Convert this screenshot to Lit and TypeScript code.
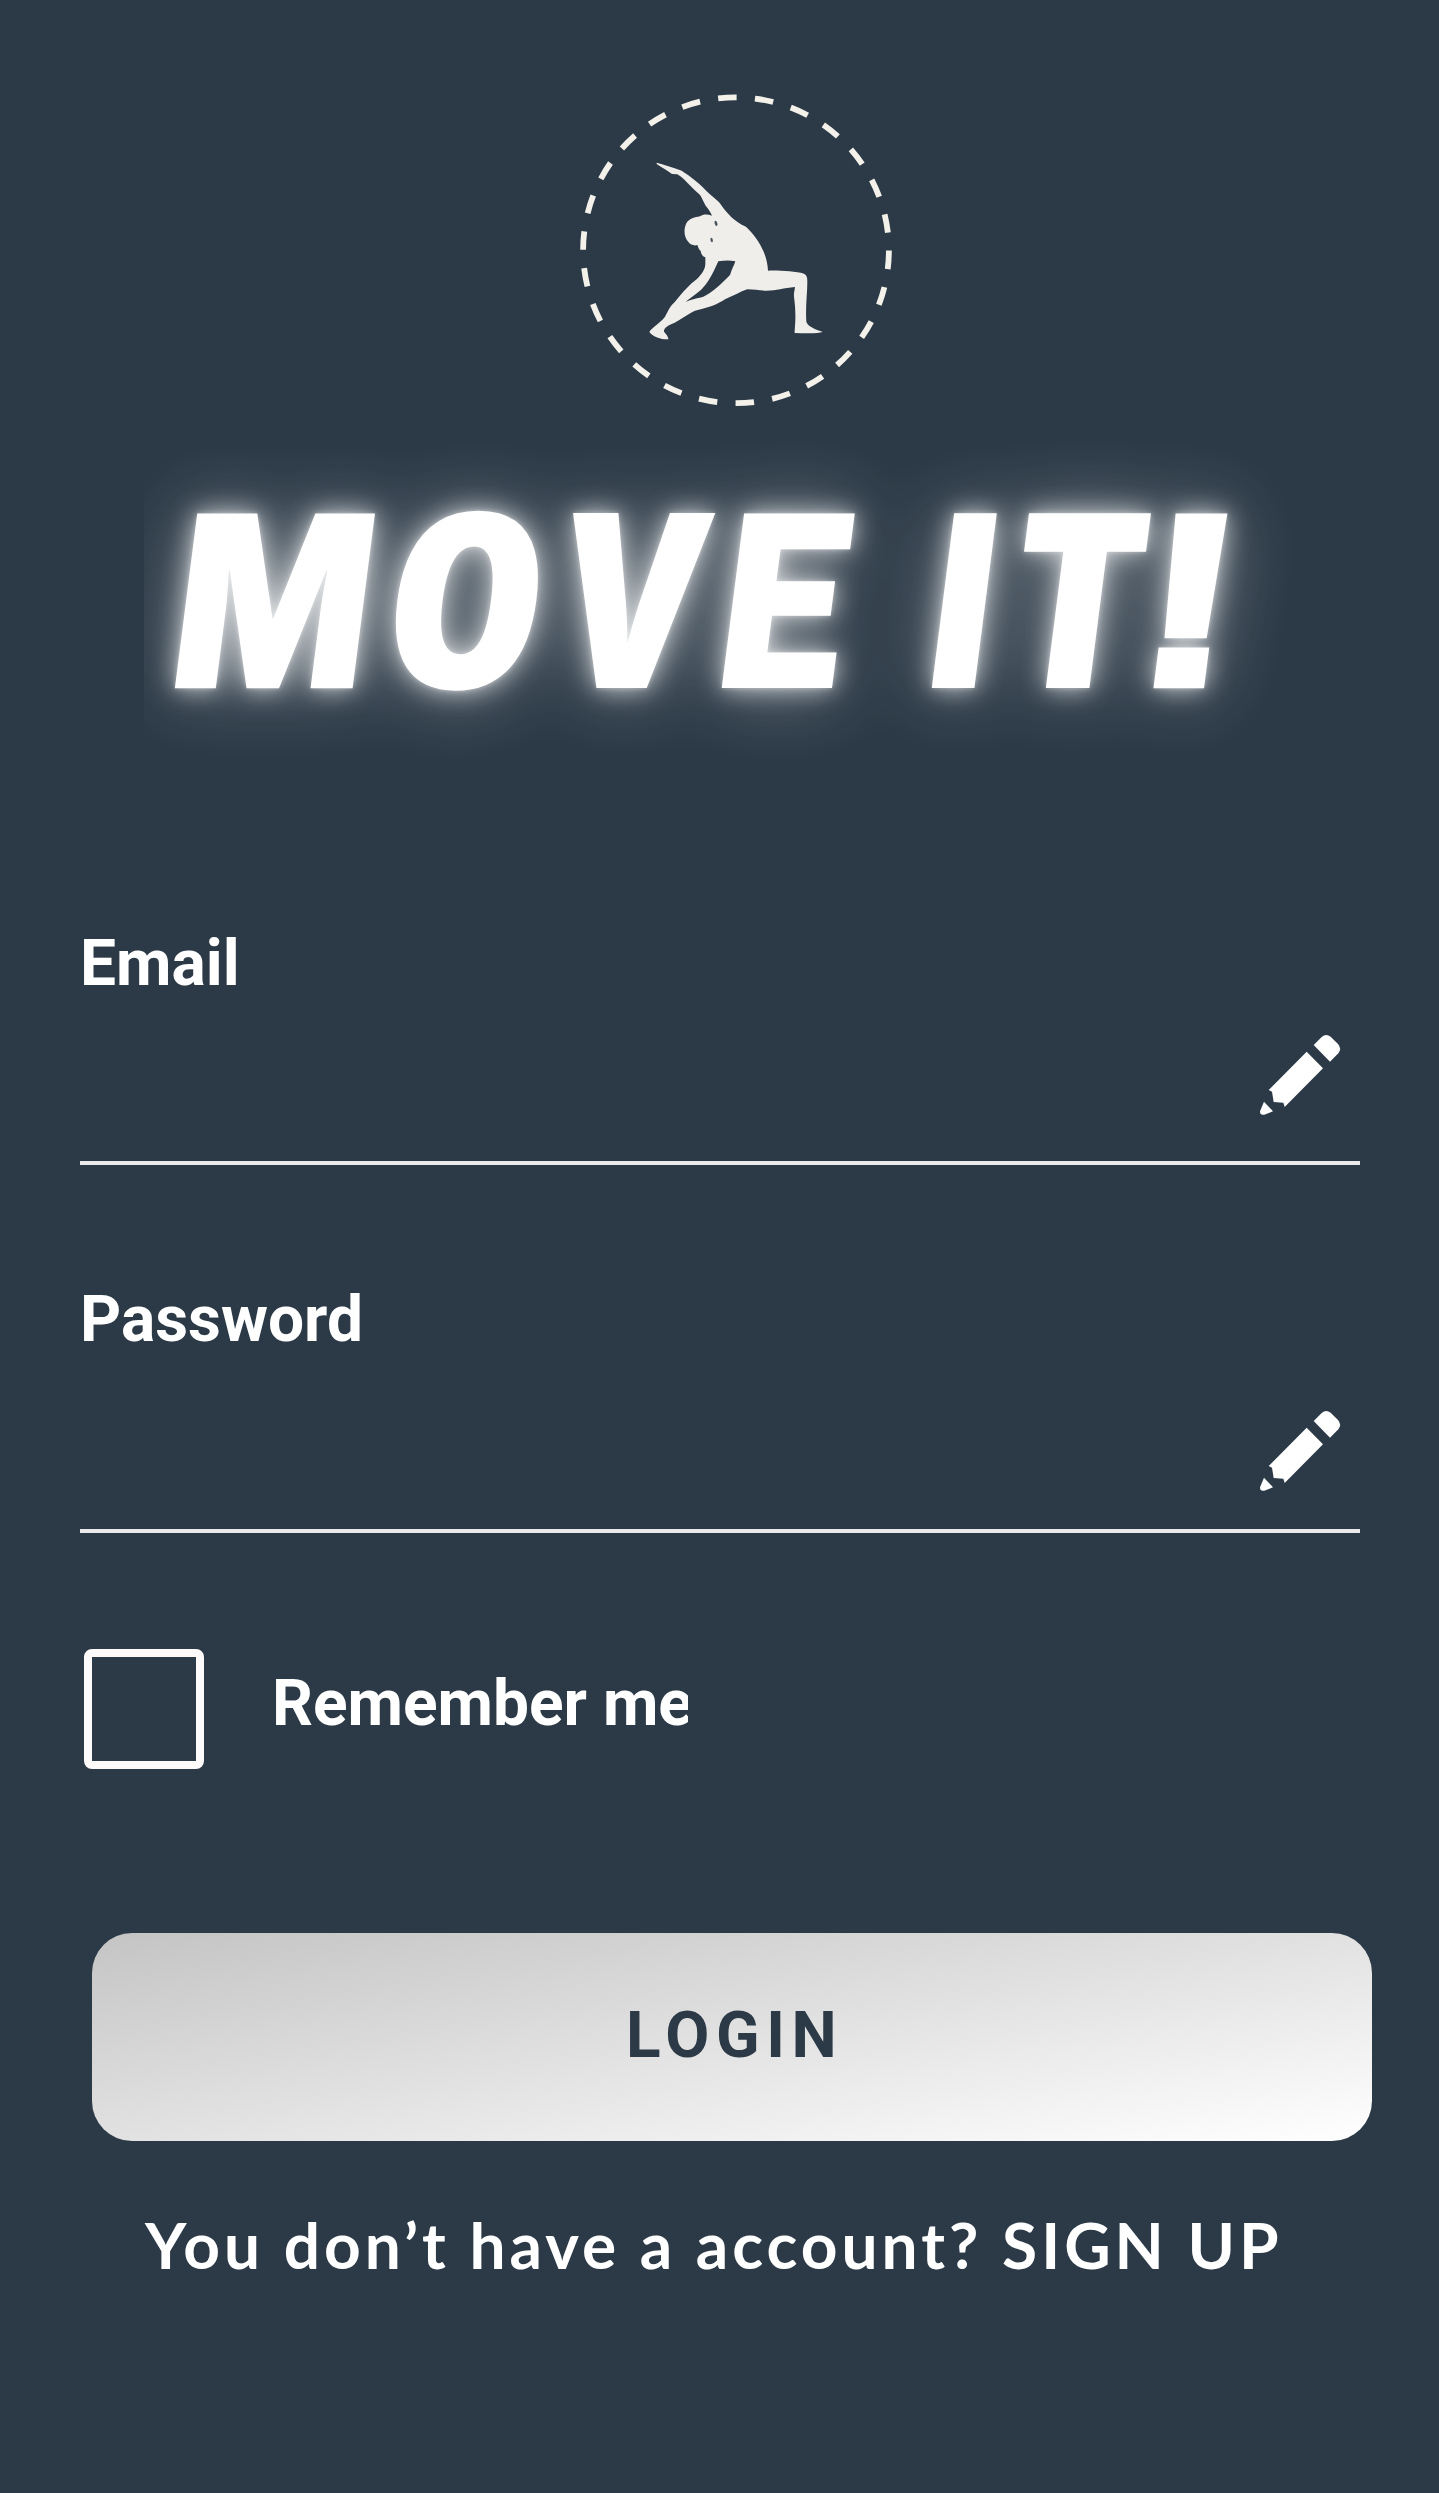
import { LitElement, html, css, svg } from "lit";
import { customElement, property } from "lit/decorators.js";

interface Glyph {
  ch: string;
  face: string;
  scale: number;
  x: number;
  y: number;
}

const SLANT = -0.128;

const TITLE: Glyph[] = [
  { ch: "M", face: "narrow", scale: 1.053, x: 159.6, y: 688.3 },
  { ch: "O", face: "narrow", scale: 1.045, x: 376.1, y: 688.3 },
  { ch: "V", face: "narrow", scale: 1.036, x: 550.7, y: 688.3 },
  { ch: "E", face: "grotesk", scale: 0.908, x: 711.9, y: 686.3 },
  { ch: "I", face: "narrow", scale: 1.023, x: 917.1, y: 688.3 },
  { ch: "T", face: "wide", scale: 0.92, x: 1001.1, y: 688.3 },
  { ch: "!", face: "mark", scale: 1.18, x: 1132.5, y: 683.8 },
];

@customElement("brand-logo")
export class BrandLogo extends LitElement {
  static styles = css`
    :host { display: block; width: 320px; height: 320px; }
    svg { display: block; width: 320px; height: 320px; }
    .ring { fill: none; stroke: #f3f1e9; stroke-width: 5.8; stroke-dasharray: 18.55 18.4; }
    .figure { fill: #f0eeea; fill-rule: evenodd; }
    .gap { fill: #4a5560; }
  `;
  render() {
    return html`<svg viewBox="576 90 320 320" aria-hidden="true">
      <circle class="ring" cx="736" cy="250.3" r="152.9" transform="rotate(0.1 736 250.3)" />
      <g transform="translate(640 150) scale(0.33333)">
        <path
          class="figure"
          d="M50 38C75 45 100 52 125 62C150 78 185 105 200 124C220 143 235 152 245 167C262 190 282 214 318 230C352 262 382 310 384 362C420 361 465 364 492 371C502 376 502 385 502 395C502 430 496 470 499 515C505 532 530 538 548 546C535 551 500 550 464 549C464 530 470 500 462 440C461 430 464 420 465 411C430 414 410 422 380 422C360 422 345 418 322 418C300 425 280 438 255 448C235 462 205 474 165 482C140 493 120 512 95 522C80 528 70 538 72 545C78 553 86 560 85 568C65 569 40 562 28 546C35 532 60 520 75 500C85 482 90 468 105 455C130 425 150 402 170 388C185 372 195 360 196 342L196 322C185 318 183 308 182 303C175 298 175 290 172 285C165 288 150 285 146 277C132 262 130 240 139 220C148 205 165 202 180 199C190 193 200 192 216 197C213 190 208 180 197 167C188 152 185 140 178 133C150 110 130 82 112 73L96 72C80 60 65 52 50 42ZM235 334C255 331 270 331 286 334C283 345 275 358 270 375C245 400 215 430 190 440C170 446 150 448 137 456C155 440 175 430 190 412C210 390 222 362 235 334Z"
        />
        <ellipse class="gap" cx="228" cy="220" rx="4" ry="8" transform="rotate(-18 228 220)" />
        <ellipse class="gap" cx="215" cy="270" rx="3.5" ry="7" transform="rotate(-12 215 270)" />
      </g>
    </svg>`;
  }
}

@customElement("glow-title")
export class GlowTitle extends LitElement {
  static styles = css`
    :host { display: block; width: 1152px; height: 400px; }
    svg { display: block; width: 1152px; height: 400px; overflow: hidden; }
    text { fill: #fff; }
    .narrow { font: 800 245px "Open Sans", sans-serif; font-stretch: 75%; }
    .wide { font: 800 245px "Open Sans", sans-serif; }
    .grotesk { font: 900 240px Roboto, sans-serif; stroke: #fff; stroke-width: 4px; }
    .mark { font: 700 241px "Liberation Sans", Arial, sans-serif; stroke: #fff; stroke-width: 9px; }
  `;
  render() {
    return html`<svg viewBox="144 410 1152 400" role="img" aria-label="MOVE IT!">
      <defs>
        <filter id="glow" filterUnits="userSpaceOnUse" x="0" y="280" width="1440" height="660" color-interpolation-filters="sRGB">
          <feGaussianBlur in="SourceGraphic" stdDeviation="38" result="far" />
          <feComponentTransfer in="far" result="farA"><feFuncA type="linear" slope="0.46" /></feComponentTransfer>
          <feGaussianBlur in="SourceGraphic" stdDeviation="13" result="mid" />
          <feComponentTransfer in="mid" result="midA"><feFuncA type="linear" slope="0.78" /></feComponentTransfer>
          <feGaussianBlur in="SourceGraphic" stdDeviation="2.5" result="near" />
          <feComponentTransfer in="near" result="nearA"><feFuncA type="linear" slope="0.4" /></feComponentTransfer>
          <feMerge>
            <feMergeNode in="farA" />
            <feMergeNode in="midA" />
            <feMergeNode in="nearA" />
            <feMergeNode in="SourceGraphic" />
          </feMerge>
        </filter>
      </defs>
      <g filter="url(#glow)">
        ${TITLE.map(
          (g) => svg`<text class=${g.face} transform=${`matrix(${g.scale} 0 ${SLANT} 1 ${g.x} ${g.y})`}>${g.ch}</text>`
        )}
      </g>
    </svg>`;
  }
}

@customElement("text-field")
export class TextField extends LitElement {
  @property() label = "";
  static styles = css`
    :host { display: block; width: 1280px; }
    .label { font: 700 64px/75px Roboto, sans-serif; color: #fff; }
    .control {
      display: flex;
      justify-content: flex-end;
      align-items: flex-start;
      box-sizing: border-box;
      height: var(--control-height);
      padding: var(--icon-gap) 20px 0 0;
      border-bottom: 4px solid #e9eae9;
    }
    svg { display: block; width: 80px; height: 80px; fill: #fff; overflow: visible; }
  `;
  render() {
    return html`
      <div class="label">${this.label}</div>
      <div class="control">
        <svg viewBox="0 0 240 240" aria-hidden="true">
          <path d="M12 200L39 229L13 239Q0 242 0 229Z" />
          <path d="M26 165L140 50L189 100L74 216L70 203L41 201L36 170Z" />
          <path d="M161 30L185 6Q198 -5 212 5L234 27Q246 41 235 55L210 80Z" />
        </svg>
      </div>
    `;
  }
}

@customElement("app-root")
export class AppRoot extends LitElement {
  static styles = css`
    :host { display: block; background: #2c3a47; color: #fff; }
    .page { display: flex; flex-direction: column; align-items: flex-start; box-sizing: border-box; width: 1439px; height: 2493px; padding: 90px 0 0 80px; }
    .logo { margin-left: 496px; }
    .title { margin-left: 64px; }
    .email { margin-top: 116px; --icon-gap: 34px; --control-height: 164px; }
    .password { margin-top: 117px; --icon-gap: 54px; --control-height: 176px; }
    .remember { display: flex; align-items: flex-start; gap: 68px; margin: 116px 0 0 4px; }
    .box { box-sizing: border-box; width: 120px; height: 120px; border: 8px solid #fffafa; border-radius: 8px; }
    .remember-label { width: 416px; margin-top: 17px; overflow: hidden; white-space: nowrap; font: 700 64px/75px Roboto, sans-serif; }
    .login {
      box-sizing: border-box;
      width: 1280px;
      height: 208px;
      margin: 164px 0 0 12px;
      padding: 65px 0 0 534px;
      border-radius: 40px;
      background: linear-gradient(to bottom right, #c4c4c4, #fff);
      color: #2c3a47;
      font: 700 64px/75px Roboto, sans-serif;
      letter-spacing: 6.6px;
    }
    .signup { margin: 65px 0 0 65px; white-space: nowrap; font: 700 64px/77px Lato, sans-serif; letter-spacing: 4px; }
  `;
  render() {
    return html`
      <main class="page">
        <brand-logo class="logo"></brand-logo>
        <glow-title class="title"></glow-title>
        <text-field class="email" label="Email"></text-field>
        <text-field class="password" label="Password"></text-field>
        <div class="remember">
          <div class="box"></div>
          <div class="remember-label">Remember me</div>
        </div>
        <div class="login">LOGIN</div>
        <div class="signup">You don’t have a account? SIGN UP</div>
      </main>
    `;
  }
}
